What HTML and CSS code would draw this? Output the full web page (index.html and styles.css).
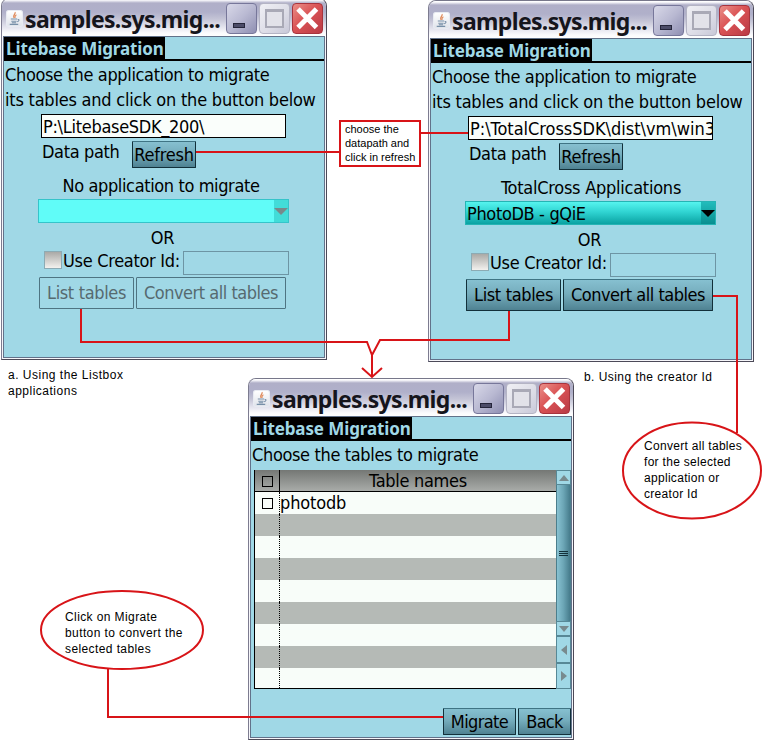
FILE: index.html
```html
<!DOCTYPE html>
<html lang="en">
<head>
<meta charset="utf-8">
<title>Litebase Migration</title>
<link rel="stylesheet" href="styles.css">
</head>
<body>
<svg class="defs" width="0" height="0">
  <defs>
    <linearGradient id="icon-bg" x1="0" y1="0" x2="0" y2="1"><stop offset="0" stop-color="#fff"/><stop offset="1" stop-color="#dfe3ea"/></linearGradient>
    <symbol id="java" viewBox="0 0 16 16">
      <rect x=".5" y=".5" width="15" height="15" rx="2" fill="url(#icon-bg)" stroke="#e8ebf2"/>
      <path d="M8.5 2c1 2-3 3-1 5.500M9.800 4.500c-2 1-1.500 1.800-1.200 3" fill="none" stroke="#e08a5a" stroke-width="1.200"/>
      <path d="M4.500 8.500h6M5 10.500h5M5.500 12h4M3.500 13.500h8M11 9c2-.5 1.500 1.500-.5 2" fill="none" stroke="#7890a8"/>
    </symbol>
    <symbol id="cross" viewBox="0 0 31 31">
      <path d="M6 6L24.500 24.500M24.500 6L6 24.500" stroke="#fff" stroke-width="5" fill="none"/>
    </symbol>
  </defs>
</svg>

<main class="canvas">
  <section class="window win-a">
    <header class="titlebar">
      <svg class="app-icon"><use href="#java"/></svg>
      <h2>samples.sys.mig...</h2>
      <span class="tb min"><i></i></span><span class="tb max"><i></i></span><span class="tb close"><svg><use href="#cross"/></svg></span>
    </header>
    <div class="client">
      <div class="tabs"><span>Litebase Migration</span></div>
      <p class="intro"><span class="i1">Choose the application to migrate</span><br><span class="i2">its tables and click on the button below</span></p>
      <div class="field">P:\LitebaseSDK_200\</div>
      <div class="path-row"><span class="path-label">Data path</span><span class="btn refresh">Refresh</span></div>
      <p class="apps none">No application to migrate</p>
      <div class="combo disabled"><span></span><b><i></i></b></div>
      <p class="or">OR</p>
      <div class="creator"><i class="check"></i><label>Use Creator Id:</label><span class="id-field"></span></div>
      <div class="actions"><span class="btn list off">List tables</span><span class="btn conv off">Convert all tables</span></div>
    </div>
  </section>

  <section class="window win-b">
    <header class="titlebar">
      <svg class="app-icon"><use href="#java"/></svg>
      <h2>samples.sys.mig...</h2>
      <span class="tb min"><i></i></span><span class="tb max"><i></i></span><span class="tb close"><svg><use href="#cross"/></svg></span>
    </header>
    <div class="client">
      <div class="tabs"><span>Litebase Migration</span></div>
      <p class="intro"><span class="i1">Choose the application to migrate</span><br><span class="i2">its tables and click on the button below</span></p>
      <div class="field long">P:\TotalCrossSDK\dist\vm\win3</div>
      <div class="path-row"><span class="path-label">Data path</span><span class="btn refresh">Refresh</span></div>
      <p class="apps">TotalCross Applications</p>
      <div class="combo"><span>PhotoDB - gQiE</span><b><i></i></b></div>
      <p class="or">OR</p>
      <div class="creator"><i class="check"></i><label>Use Creator Id:</label><span class="id-field"></span></div>
      <div class="actions"><span class="btn list">List tables</span><span class="btn conv">Convert all tables</span></div>
    </div>
  </section>

  <section class="window win-c">
    <header class="titlebar">
      <svg class="app-icon"><use href="#java"/></svg>
      <h2>samples.sys.mig...</h2>
      <span class="tb min"><i></i></span><span class="tb max"><i></i></span><span class="tb close"><svg><use href="#cross"/></svg></span>
    </header>
    <div class="client">
      <div class="tabs"><span>Litebase Migration</span></div>
      <p class="intro"><span class="i1">Choose the tables to migrate</span></p>
      <div class="grid-wrap">
        <div class="grid">
          <div class="row head"><span class="cell"><i></i></span><span class="name">Table names</span></div>
          <div class="row"><span class="cell"><i></i></span><span class="name">photodb</span></div>
          <div class="row"><span class="cell"></span></div>
          <div class="row"><span class="cell"></span></div>
          <div class="row"><span class="cell"></span></div>
          <div class="row"><span class="cell"></span></div>
          <div class="row"><span class="cell"></span></div>
          <div class="row"><span class="cell"></span></div>
          <div class="row"><span class="cell"></span></div>
          <div class="row last"><span class="cell"></span></div>
        </div>
        <div class="scroll">
          <span class="arrow up"><i></i></span>
          <span class="thumb"><i></i><i></i><i></i></span>
          <span class="arrow down"><i></i></span>
          <span class="arrow left"><i></i></span>
          <span class="arrow right"><i></i></span>
        </div>
      </div>
      <div class="footer"><span class="btn migrate">Migrate</span><span class="btn back">Back</span></div>
    </div>
  </section>

  <svg class="links" width="772" height="740" fill="none" stroke="#d81418" stroke-width="2">
    <path d="M196 152H340M420 133H468"/>
    <path d="M81 309V342H367L372 355L380 340H509V311M372 354V376M362 368L372 377L382 368"/>
    <path d="M713 296H737V433"/>
    <path d="M108 669V717H443"/>
    <ellipse cx="692" cy="470.500" rx="69" ry="48"/>
    <ellipse cx="122" cy="630" rx="81" ry="39"/>
  </svg>

  <p class="note cap-a">a. Using the Listbox<br>applications</p>
  <p class="note cap-b">b. Using the creator Id</p>
  <p class="note convert">Convert all tables<br>for the selected<br>application or<br>creator Id</p>
  <p class="note click">Click on Migrate<br>button to convert the<br>selected tables</p>
  <p class="choose">choose the<br>datapath and<br>click in refresh</p>
</main>
</body>
</html>
```
FILE: styles.css
```css
* { box-sizing: border-box; }
body { margin: 0; background: #fff; color: #000; overflow: hidden; }
p, h2 { margin: 0; }
.defs { position: absolute; }
.canvas { position: relative; width: 772px; height: 740px; overflow: hidden; }

/* windows */
.window {
  position: absolute; width: 326px; height: 362px;
  border: 1px solid #4c4a58; border-top-color: #77778a; border-left-color: #7d7c90;
  border-radius: 8px 8px 0 0;
  background: #f6f6fa; overflow: hidden;
  font: 18px/25px "DejaVu Sans Condensed", "DejaVu Sans", sans-serif;
  letter-spacing: -.35px; white-space: nowrap;
}
.win-a { left: 1px; top: -2px; }
.win-b { left: 428px; top: 0; }
.win-c { left: 248px; top: 378px; }

.titlebar {
  height: 38px; display: flex; align-items: flex-start; padding: 4px 0 0 4px;
  background: linear-gradient(#fff 0, #fdfdff 1px, #b0afc8 4px, #b0b0ca 13px, #c4c4d6 20px, #e4e4ee 28px, #fbfbfd 34px, #fff);
}
.app-icon { width: 17px; height: 17px; margin-top: 7px; }
.titlebar h2 {
  width: 203px; padding-left: 2px; margin-top: 1px;
  font: bold 23px/30px "Noto Sans", sans-serif; letter-spacing: -.65px; color: #15151c;
}
.tb { width: 31px; height: 31px; margin-right: 2px; border-radius: 4px; border: 1px solid #77779a; flex: none; }
.tb.min { background: linear-gradient(135deg, #d8d8e8, #b9b9d2 50%, #8f8fb2); }
.tb.min i { display: block; width: 12px; height: 5px; margin: 19px 0 0 6px; background: #4c4c68; border: 1px solid #25253a; }
.tb.max { background: linear-gradient(135deg, #f0f0f5, #dcdce6 60%, #c8c8d8); border-color: #b4b4c4; }
.tb.max i { display: block; width: 19px; height: 19px; margin: 5px; border: 2px solid #a9a9b6; border-top-width: 3px; background: #e2e2e9; }
.tb.close { background: linear-gradient(135deg, #ea8f88, #da5355 45%, #b93a46); border-color: #a8333d; }
.tb.close svg { display: block; width: 31px; height: 31px; margin: -1px; }

.client {
  width: 322px; height: 322px; margin: -1px 0 0 1px;
  border: 1px solid #62728a; background: #a0d8e6;
}
.tabs { height: 24px; border-bottom: 2px solid #000; }
.tabs span {
  display: block; width: 161px; height: 23px; padding-left: 2px; background: #000; color: #a0d8e6;
  font: bold 17px/24px "Noto Sans", sans-serif; letter-spacing: -.1px;
}
.intro { margin-top: 1px; padding-left: 1px; }
.i2 { letter-spacing: -.22px; }

/* migration form */
.field {
  width: 245px; height: 24px; margin: 2px 0 0 37px; padding: 1px 0 0 1px; border: 1px solid #000;
  background: #fafefb; line-height: 22px; overflow: hidden; letter-spacing: -.3px;
}
.field.long { letter-spacing: -.02px; }
.path-row { display: flex; align-items: flex-start; margin: 3px 0 0 37px; }
.path-label { width: 91px; margin-top: -2px; padding-left: 1px; }
.btn {
  border: 1px solid #12303a; border-top-color: #3f7484; border-radius: 1px; text-align: center;
  background: linear-gradient(#86c0d0, #75adbd 45%, #4f8292);
}
.refresh { width: 64px; height: 27px; letter-spacing: -.2px; }
.apps { margin-top: 5px; text-align: center; letter-spacing: -.25px; }
.apps.none { padding-right: 6px; letter-spacing: -.38px; }
.combo {
  width: 251px; height: 24px; margin: 1px 0 0 34px; display: flex; justify-content: space-between;
  border: 1px solid #25b4b4; line-height: 24px; background: linear-gradient(#55f4ee, #30d4d2 45%, #0aa2a2);
}
.combo span { padding-left: 1px; }
.combo b { width: 14px; background: linear-gradient(#22bcbc, #088f90); }
.combo b i { display: block; margin: 8px 0 0; border: 7px solid transparent; border-top-color: #000; border-bottom: 0; }
.combo.disabled { background: #60fcf8; border-color: #35c4ca; }
.combo.disabled b { background: #42dcd8; }
.combo.disabled i { border-top-color: #78898b; }
.or { margin-top: 2px; text-align: center; padding-right: 3px; }
.creator { display: flex; height: 24px; margin: 1px 0 0 40px; }
.check { width: 18px; height: 18px; border: 1px solid #8cabb4; background: linear-gradient(#aaa9a6, #f3f1ee); }
.creator label { width: 121px; padding-left: 1px; line-height: 24px; margin-top: -2px; letter-spacing: -.3px; }
.id-field { width: 106px; height: 24px; border: 1px solid #6d95a4; }
.actions { display: flex; gap: 2px; margin: 2px 0 0 35px; }
.actions .btn { height: 32px; line-height: 30px; }
.list { width: 95px; }
.conv { width: 150px; letter-spacing: -.48px; }
.btn.off { background: none; color: #566a70; border-color: #4e7482; }

/* table list */
.grid-wrap { display: flex; margin: 3px 0 0 3px; height: 219px; }
.grid { width: 302px; border: solid #000; border-width: 0 0 1px 1px; }
.row { height: 22px; display: flex; background: #f8fdf9; line-height: 22px; }
.row:nth-child(odd) { background: #b5bab6; }
.row.head { border-bottom: 1px solid #000; background: linear-gradient(#747774, #a9aca9); }
.row.last { height: 20px; }
.row .cell { width: 25px; border-right: 1px dotted #000; flex: none; }
.row.head .cell { border-right-style: solid; }
.cell i { display: block; width: 11px; height: 11px; margin: 6px 0 0 7px; border: 1px solid #000; }
.row.head .name { flex: 1; text-align: center; letter-spacing: -.3px; line-height: 21px; }
.name { letter-spacing: -.15px; }
.scroll { width: 15px; display: flex; flex-direction: column; }
.arrow { display: flex; align-items: center; justify-content: center; border: 1px solid #578896; flex: none; }
.arrow i { border: 5px solid transparent; }
.up, .down { height: 15px; }
.up i { border-top: 0; border-bottom: 6px solid #788a8e; }
.down i { border-bottom: 0; border-top: 6px solid #788a8e; }
.left { height: 27px; }
.left i { border-left: 0; border-right: 6px solid #788a8e; }
.right { height: 26px; }
.right i { border-right: 0; border-left: 6px solid #788a8e; }
.thumb {
  flex: 1; display: flex; flex-direction: column; align-items: center; justify-content: center; gap: 1px;
  border: solid #4c7e8c; border-width: 0 1px; background: linear-gradient(90deg, #88c2d2, #6ba5b5 50%, #467c8c);
}
.thumb i { width: 9px; height: 1px; background: #12303a; }
.footer { display: flex; gap: 2px; justify-content: flex-end; margin-top: 19px; }
.footer .btn { height: 27px; }
.migrate { width: 73px; letter-spacing: -.6px; }
.back { width: 53px; letter-spacing: -.7px; }

/* annotations */
.links { position: absolute; left: 0; top: 0; }
.note { position: absolute; font: 12px/16px "Liberation Sans", Arial, sans-serif; letter-spacing: .4px; white-space: nowrap; }
.cap-a { left: 8px; top: 367px; letter-spacing: .5px; }
.cap-b { left: 584px; top: 369px; letter-spacing: .45px; }
.convert { left: 644px; top: 438px; letter-spacing: .3px; }
.click { left: 65px; top: 609px; }
.choose {
  position: absolute; left: 339px; top: 120px; width: 82px; height: 47px; padding: 0 0 0 4px;
  border: 2px solid #d81418; background: #fff; font: 11px/14px "Liberation Sans", Arial, sans-serif; white-space: nowrap;
}
```
